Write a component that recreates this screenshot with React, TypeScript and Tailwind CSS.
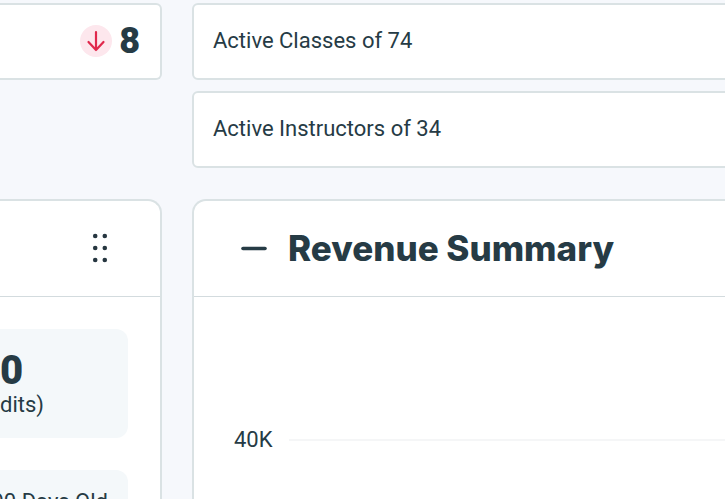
import type { ReactNode } from "react";

type Stat = { id: string; label: string };

const STATS: Stat[] = [
  { id: "classes", label: "Active Classes of 74" },
  { id: "instructors", label: "Active Instructors of 34" },
];

function StatCard({ children }: { children: ReactNode }) {
  return (
    <div className="flex h-[77px] items-center rounded-md border-2 border-[#dae2e4] bg-white px-[19px] pb-0.5">
      {children}
    </div>
  );
}

function DownBadge() {
  return (
    <svg width="32" height="32" viewBox="0 0 32 32" fill="none" role="img" aria-label="Down">
      <circle cx="16" cy="16" r="16" fill="#fde7ed" />
      <path
        d="M16 7v18M8.5 17l7.5 8 7.5-8"
        stroke="#e0284c"
        strokeWidth="2.2"
        strokeLinecap="round"
        strokeLinejoin="round"
      />
    </svg>
  );
}

function DragHandle() {
  return (
    <button type="button" aria-label="Move panel" className="p-2">
      <svg width="16" height="32" viewBox="0 0 16 32" fill="#263640">
        {[3, 15, 27].map((cy) => (
          <g key={cy}>
            <circle cx="3.2" cy={cy} r="2.3" />
            <circle cx="12.8" cy={cy} r="2.3" />
          </g>
        ))}
      </svg>
    </button>
  );
}

export default function App() {
  return (
    <main className="grid h-screen grid-cols-[162px_minmax(0,1fr)] gap-x-[30px] overflow-hidden bg-[#f6f8fc] pt-[3px] font-['Roboto',sans-serif] text-[22px] leading-7 text-[#263b45]">
      {/* Left column, runs off the left edge */}
      <div className="flex flex-col">
        <div className="flex h-[77px] items-center justify-end gap-[7px] rounded-r-md border-2 border-l-0 border-[#dae2e4] bg-white pb-0.5 pr-5">
          <DownBadge />
          <strong className="text-[36px] font-black leading-10">8</strong>
        </div>

        <section className="mt-[119px] flex flex-1 flex-col rounded-tr-[14px] border-2 border-b-0 border-l-0 border-[#dae2e4] bg-white">
          <header className="flex h-24 items-center justify-end border-b border-[#d3dbde] pr-11">
            <DragHandle />
          </header>
          <div className="flex flex-col gap-8 pr-8 pt-8">
            <div className="h-[109px] rounded-r-xl bg-[#f4f8fa] pt-[22px]">
              <strong className="block text-[40px] font-black leading-10">0</strong>
              <span className="block">dits)</span>
            </div>
            <div className="h-[109px] rounded-r-xl bg-[#f4f8fa] pt-[18px]">
              <span className="flex justify-end whitespace-nowrap pr-5">90 Days Old</span>
            </div>
          </div>
        </section>
      </div>

      {/* Right column, runs off the right edge */}
      <div className="-mr-4 flex flex-col">
        <div className="flex flex-col gap-[11px]">
          {STATS.map((s) => (
            <StatCard key={s.id}>{s.label}</StatCard>
          ))}
        </div>

        <section className="mt-[31px] flex flex-1 flex-col rounded-t-[14px] border-2 border-b-0 border-[#dae2e4] bg-white">
          <header className="flex h-24 items-center gap-5 border-b border-[#d3dbde] px-[46px] pb-0.5">
            <button type="button" aria-label="Collapse Revenue Summary">
              <svg width="28" height="28" viewBox="0 0 28 28" stroke="#263b45" strokeWidth="3.6" strokeLinecap="round">
                <path d="M3 14.5h22" />
              </svg>
            </button>
            <h2 className="font-['Inter',sans-serif] text-[35px] font-extrabold leading-10">Revenue Summary</h2>
          </header>
          <div className="flex items-center gap-4 pl-10 pt-[129px]">
            <span>40K</span>
            <div className="h-0.5 flex-1 bg-[#f5f6f7]" />
          </div>
        </section>
      </div>
    </main>
  );
}
